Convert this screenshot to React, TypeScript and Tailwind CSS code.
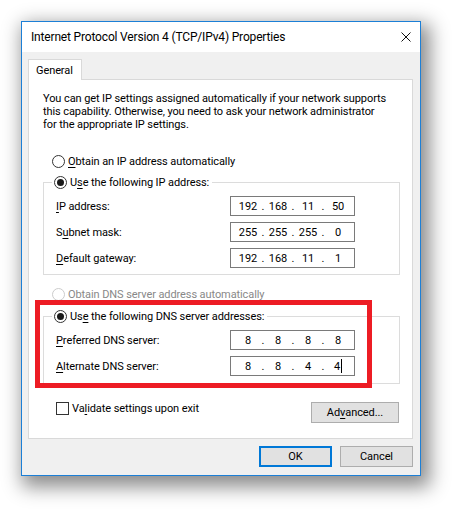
import type { ReactNode } from 'react';

function Acc({ children }: { children: ReactNode }) {
  return <span className="underline decoration-1 underline-offset-[2px]">{children}</span>;
}

function Radio({ checked, disabled }: { checked?: boolean; disabled?: boolean }) {
  return (
    <span
      className={
        disabled
          ? 'w-[13px] h-[13px] shrink-0 rounded-full border border-[#cccccc] bg-white flex items-center justify-center'
          : 'w-[13px] h-[13px] shrink-0 rounded-full border border-[#333333] bg-white flex items-center justify-center'
      }>
      {checked && <span className="w-[7px] h-[7px] rounded-full bg-[#1a1a1a]" />}
    </span>
  );
}

function RadioRow({ checked, disabled, children }: { checked?: boolean; disabled?: boolean; children: ReactNode }) {
  return (
    <div className={disabled ? 'h-[16px] flex items-center text-[#888888]' : 'h-[16px] flex items-center text-black'}>
      <Radio checked={checked} disabled={disabled} />
      <span className="ml-[3px] whitespace-nowrap">{children}</span>
    </div>
  );
}

function IpBox({ parts, caret }: { parts: string[]; caret?: boolean }) {
  return (
    <div className="w-[125px] h-[20px] border border-[#7a7a7a] bg-white flex items-center pl-[5px]">
      {parts.map((p, i) => (
        <div key={i} className="flex items-center">
          {i > 0 && <span className="w-[6px] text-center">.</span>}
          <span className="w-[24px] flex items-center justify-center">
            {p}
            {caret && i === parts.length - 1 && <span className="w-px h-[14px] bg-black ml-px" />}
          </span>
        </div>
      ))}
    </div>
  );
}

function FieldRow({ label, parts, caret }: { label: ReactNode; parts: string[]; caret?: boolean }) {
  return (
    <div className="flex items-center h-[20px]">
      <span className="w-[174px] whitespace-nowrap">{label}</span>
      <IpBox parts={parts} caret={caret} />
    </div>
  );
}

function Button({ children, primary, width }: { children: ReactNode; primary?: boolean; width: string }) {
  return (
    <button
      className={
        primary
          ? `${width} h-[21px] border-2 border-[#0078d7] bg-[#e1e1e1] text-black flex items-center justify-center`
          : `${width} h-[21px] border border-[#adadad] bg-[#e1e1e1] text-black flex items-center justify-center`
      }>
      {children}
    </button>
  );
}

export default function App() {
  return (
    <div className="relative w-[463px] h-[518px] bg-white pt-[21px] pl-[21px] font-[Roboto] text-[11px] leading-[13px] tracking-[-0.09px] text-black">
      <div className="w-[400px] h-[455px] border border-[#1c7fd6] bg-[#f0f0f0] flex flex-col shadow-[5px_7px_18px_4px_rgba(0,0,0,0.45)]">
        {/* title bar */}
        <div className="h-[30px] shrink-0 bg-white flex items-center justify-between pl-[9px] pr-[9px]">
          <span className="text-[12px] tracking-[-0.17px] whitespace-nowrap">
            Internet Protocol Version 4 (TCP/IPv4) Properties
          </span>
          <svg width="10" height="10" viewBox="0 0 10 10" className="shrink-0">
            <path d="M0.5 0.5 L9.5 9.5 M9.5 0.5 L0.5 9.5" stroke="#111" strokeWidth="1" fill="none" />
          </svg>
        </div>

        <div className="flex-1 flex flex-col pl-[6px] pt-[7px]">
          {/* tab strip */}
          <div className="flex">
            <div className="relative z-10 -mb-px w-[54px] h-[21px] bg-white border border-b-0 border-[#d9d9d9] pl-[7px] flex items-center">
              General
            </div>
          </div>

          {/* tab panel */}
          <div className="w-[385px] h-[360px] bg-white border border-[#d9d9d9] flex flex-col pl-[14px] pt-[12px]">
            <p className="whitespace-nowrap">
              You can get IP settings assigned automatically if your network supports
              <br />
              this capability. Otherwise, you need to ask your network administrator
              <br />
              for the appropriate IP settings.
            </p>

            <div className="mt-[22px] pl-[9px]">
              <RadioRow>
                <Acc>O</Acc>btain an IP address automatically
              </RadioRow>
            </div>

            <fieldset className="mt-[5px] w-[357px] border border-[#dcdcdc] pl-[12px] pb-[6px]">
              <legend className="ml-[-4px] pl-[2px] pr-[3px] bg-white">
                <RadioRow checked>
                  U<Acc>s</Acc>e the following IP address:
                </RadioRow>
              </legend>
              <div className="mt-[6px] flex flex-col gap-[6px]">
                <FieldRow label={<><Acc>I</Acc>P address:</>} parts={['192', '168', '11', '50']} />
                <FieldRow label={<>S<Acc>u</Acc>bnet mask:</>} parts={['255', '255', '255', '0']} />
                <FieldRow label={<><Acc>D</Acc>efault gateway:</>} parts={['192', '168', '11', '1']} />
              </div>
            </fieldset>

            <div className="mt-[11px] pl-[9px]">
              <RadioRow disabled>
                O<Acc>b</Acc>tain DNS server address automatically
              </RadioRow>
            </div>

            <fieldset className="mt-[6px] w-[357px] border border-[#dcdcdc] pl-[12px] pb-[7px]">
              <legend className="ml-[-4px] pl-[2px] pr-[3px] bg-white">
                <RadioRow checked>
                  Us<Acc>e</Acc> the following DNS server addresses:
                </RadioRow>
              </legend>
              <div className="mt-[6px] flex flex-col gap-[6px]">
                <FieldRow label={<><Acc>P</Acc>referred DNS server:</>} parts={['8', '8', '8', '8']} />
                <FieldRow label={<><Acc>A</Acc>lternate DNS server:</>} parts={['8', '8', '4', '4']} caret />
              </div>
            </fieldset>

            <div className="mt-[18px] flex items-start justify-between pl-[13px] pr-[13px]">
              <div className="flex items-center h-[13px] whitespace-nowrap">
                <span className="w-[13px] h-[13px] border border-[#333333] bg-white mr-[3px]" />
                Va<Acc>l</Acc>idate settings upon exit
              </div>
              <Button width="w-[88px]">
                Ad<Acc>v</Acc>anced...
              </Button>
            </div>
          </div>

          {/* dialog buttons */}
          <div className="mt-[7px] flex justify-end gap-[8px] pr-[7px]">
            <Button primary width="w-[73px]">OK</Button>
            <Button width="w-[73px]">Cancel</Button>
          </div>
        </div>
      </div>

      {/* red highlight drawn over the DNS group */}
      <div className="absolute left-[35px] top-[300px] w-[337px] h-[88px] border-[5px] border-[#ed1c24] pointer-events-none" />
    </div>
  );
}
